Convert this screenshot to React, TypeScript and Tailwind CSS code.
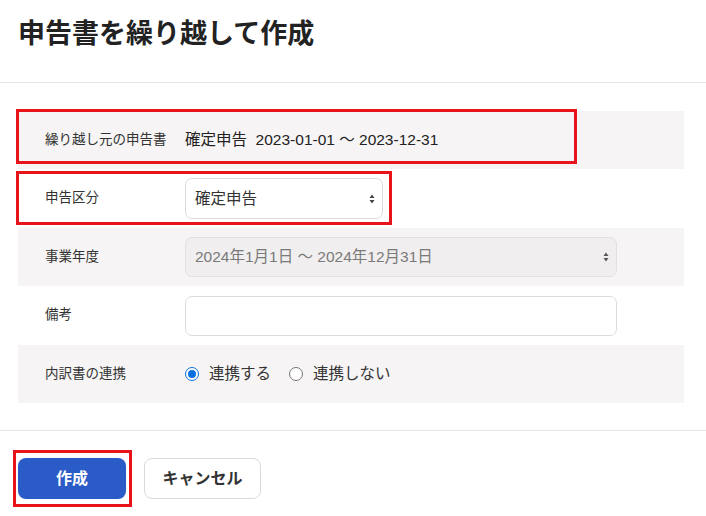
import type { ReactNode } from 'react';

const font = { fontFamily: '"Liberation Sans", "Noto Sans CJK JP", sans-serif' };

function SelectArrows({ color = '#444' }: { color?: string }) {
  return (
    <svg
      className="pointer-events-none absolute right-[8px] top-1/2 -translate-y-1/2"
      width="6"
      height="10"
      viewBox="0 0 6 10"
    >
      <path d="M3 0.5 L5.5 4 H0.5 Z" fill={color} />
      <path d="M3 9.5 L5.5 6 H0.5 Z" fill={color} />
    </svg>
  );
}

function Row({
  label,
  gray,
  height,
  children,
}: {
  label: string;
  gray?: boolean;
  height: string;
  children: ReactNode;
}) {
  return (
    <div className={`flex items-center ${height} ${gray ? 'bg-[#f6f4f4]' : 'bg-white'}`}>
      <div className="w-[167px] shrink-0 pl-[27px] text-[13.5px] text-[#333]">{label}</div>
      <div className="flex flex-1 items-center">{children}</div>
    </div>
  );
}

function Radio({ checked, label }: { checked?: boolean; label: string }) {
  return (
    <label className="flex items-center gap-[10px] text-[15.5px] text-[#333]">
      {checked ? (
        <span className="flex h-[14px] w-[14px] items-center justify-center rounded-full border-[1.5px] border-[#0b6fe0] bg-white">
          <span className="h-[8px] w-[8px] rounded-full bg-[#0b6fe0]" />
        </span>
      ) : (
        <span className="h-[14px] w-[14px] rounded-full border border-[#767676] bg-white" />
      )}
      {label}
    </label>
  );
}

export default function App() {
  return (
    <div className="relative min-h-[516px] w-[706px] bg-white text-[#222]" style={font}>
      <header className="h-[83px] border-b border-[#e6e6e6] pl-[18px] pt-[21px]">
        <h1 className="text-[27px] font-bold leading-[27px] text-[#222]">申告書を繰り越して作成</h1>
      </header>

      <main className="ml-[18px] w-[666px] pt-[28px]">
        <Row label="繰り越し元の申告書" gray height="h-[58px]">
          <span className="text-[15.5px] text-[#222]">確定申告&nbsp;&nbsp;2023-01-01 ～ 2023-12-31</span>
        </Row>

        <Row label="申告区分" height="h-[59px]">
          <div className="relative">
            <select
              className="h-[41px] w-[198px] appearance-none rounded-[7px] border border-[#dcdcdc] bg-white pl-[9px] text-[15.5px] text-[#333] outline-none"
              defaultValue="kakutei"
            >
              <option value="kakutei">確定申告</option>
              <option value="shusei">修正申告</option>
            </select>
            <SelectArrows />
          </div>
        </Row>

        <Row label="事業年度" gray height="h-[58px]">
          <div className="relative">
            <select
              disabled
              className="h-[40px] w-[432px] appearance-none rounded-[7px] border border-[#e3e0e0] bg-[#f0eeee] pl-[9px] text-[15.5px] text-[#7a7a7a] opacity-100 outline-none"
              defaultValue="2024"
            >
              <option value="2024">2024年1月1日 ～ 2024年12月31日</option>
            </select>
            <SelectArrows color="#555" />
          </div>
        </Row>

        <Row label="備考" height="h-[59px]">
          <input
            type="text"
            className="h-[40px] w-[432px] rounded-[7px] border border-[#dcdcdc] bg-white px-[9px] text-[15px] outline-none"
          />
        </Row>

        <Row label="内訳書の連携" gray height="h-[58px]">
          <div className="flex items-center gap-[18px]">
            <Radio checked label="連携する" />
            <Radio label="連携しない" />
          </div>
        </Row>
      </main>

      <footer className="mt-[27px] flex gap-[18px] border-t border-[#e6e6e6] pl-[18px] pt-[27px]">
        <button className="h-[41px] w-[108px] rounded-[8px] bg-[#2a5bc6] text-[16px] font-bold text-white">
          作成
        </button>
        <button className="h-[41px] w-[117px] rounded-[8px] border border-[#dadada] bg-white text-[16px] font-bold text-[#333]">
          キャンセル
        </button>
      </footer>

      {/* annotation boxes */}
      <div className="pointer-events-none absolute left-[16px] top-[109px] h-[55px] w-[561px] border-[3px] border-[#e8141c]" />
      <div className="pointer-events-none absolute left-[16px] top-[171px] h-[54px] w-[376px] border-[3px] border-[#e8141c]" />
      <div className="pointer-events-none absolute left-[13px] top-[450px] h-[57px] w-[119px] border-[3px] border-[#e8141c]" />
    </div>
  );
}
